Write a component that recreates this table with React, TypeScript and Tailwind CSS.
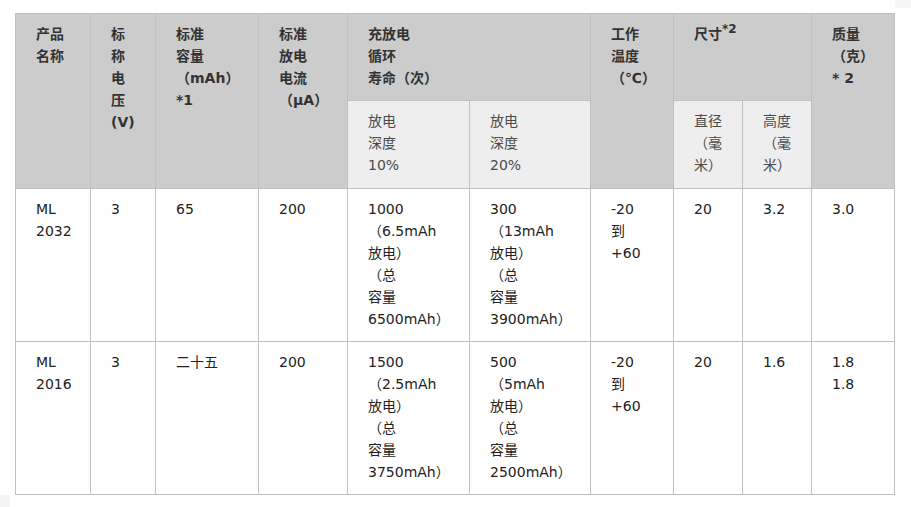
import React from "react";

const font = { fontFamily: '"DejaVu Sans", "Noto Sans CJK SC", sans-serif' };

function Lines({ lines }: { lines: React.ReactNode[] }) {
  return (
    <>
      {lines.map((l, i) => (
        <div key={i} className="whitespace-nowrap">
          {l}
        </div>
      ))}
    </>
  );
}

const th =
  "border border-[#c0c0c0] bg-[#cccccc] text-left align-top font-bold text-[#333333] pl-[20px] pr-[4px] pt-[9px] pb-[11px]";
const sub =
  "border border-[#c0c0c0] bg-[#eeeeee] text-left align-top font-normal text-[#4a4a4a] pl-[20px] pr-[4px] pt-[9px] pb-[11px]";
const td =
  "border border-[#c0c0c0] bg-white text-left align-top text-[#222222] pl-[20px] pr-[4px] pt-[9px] pb-[11px]";

const rows: React.ReactNode[][][] = [
  [
    ["ML", "2032"],
    ["3"],
    ["65"],
    ["200"],
    ["1000", "（6.5mAh", "放电）", "（总", "容量", "6500mAh）"],
    ["300", "（13mAh", "放电）", "（总", "容量", "3900mAh）"],
    ["-20", "到", "+60"],
    ["20"],
    ["3.2"],
    ["3.0"],
  ],
  [
    ["ML", "2016"],
    ["3"],
    ["二十五"],
    ["200"],
    ["1500", "（2.5mAh", "放电）", "（总", "容量", "3750mAh）"],
    ["500", "（5mAh", "放电）", "（总", "容量", "2500mAh）"],
    ["-20", "到", "+60"],
    ["20"],
    ["1.6"],
    ["1.8", "1.8"],
  ],
];

export default function App() {
  const widths = [75, 65, 103, 89, 122, 121, 83, 69, 69, 83];
  return (
    <div
      className="relative w-[911px] h-[507px] bg-white pt-[13px] pl-[15px] text-[14px] leading-[22px]"
      style={font}
    >
      <div className="absolute right-0 top-0 w-[16px] h-[8px] bg-[#f6f6f6]" />
      <div className="absolute left-0 bottom-0 w-[10px] h-[12px] bg-[#f4f4f4]" />
      <table className="table-fixed border-collapse w-[880px]">
        <colgroup>
          {widths.map((w, i) => (
            <col key={i} style={{ width: w }} />
          ))}
        </colgroup>
        <thead>
          <tr className="h-[87px]">
            <th rowSpan={2} className={th}>
              <Lines lines={["产品", "名称"]} />
            </th>
            <th rowSpan={2} className={th}>
              <Lines lines={["标", "称", "电", "压", "(V)"]} />
            </th>
            <th rowSpan={2} className={th}>
              <Lines lines={["标准", "容量", "（mAh）", "*1"]} />
            </th>
            <th rowSpan={2} className={th}>
              <Lines lines={["标准", "放电", "电流", "（μA）"]} />
            </th>
            <th colSpan={2} className={th}>
              <Lines lines={["充放电", "循环", "寿命（次）"]} />
            </th>
            <th rowSpan={2} className={th}>
              <Lines lines={["工作", "温度", "（℃）"]} />
            </th>
            <th colSpan={2} className={th}>
              <div className="whitespace-nowrap">
                尺寸<sup className="text-[12px] relative top-[-6px] leading-none">*2</sup>
              </div>
            </th>
            <th rowSpan={2} className={th}>
              <Lines lines={["质量", "（克）", "* 2"]} />
            </th>
          </tr>
          <tr className="h-[88px]">
            <th className={sub}>
              <Lines lines={["放电", "深度", "10%"]} />
            </th>
            <th className={sub}>
              <Lines lines={["放电", "深度", "20%"]} />
            </th>
            <th className={sub}>
              <Lines lines={["直径", "（毫", "米）"]} />
            </th>
            <th className={sub}>
              <Lines lines={["高度", "（毫", "米）"]} />
            </th>
          </tr>
        </thead>
        <tbody>
          {rows.map((r, ri) => (
            <tr key={ri} className="h-[153px]">
              {r.map((c, ci) => (
                <td key={ci} className={td}>
                  <Lines lines={c} />
                </td>
              ))}
            </tr>
          ))}
        </tbody>
      </table>
    </div>
  );
}
